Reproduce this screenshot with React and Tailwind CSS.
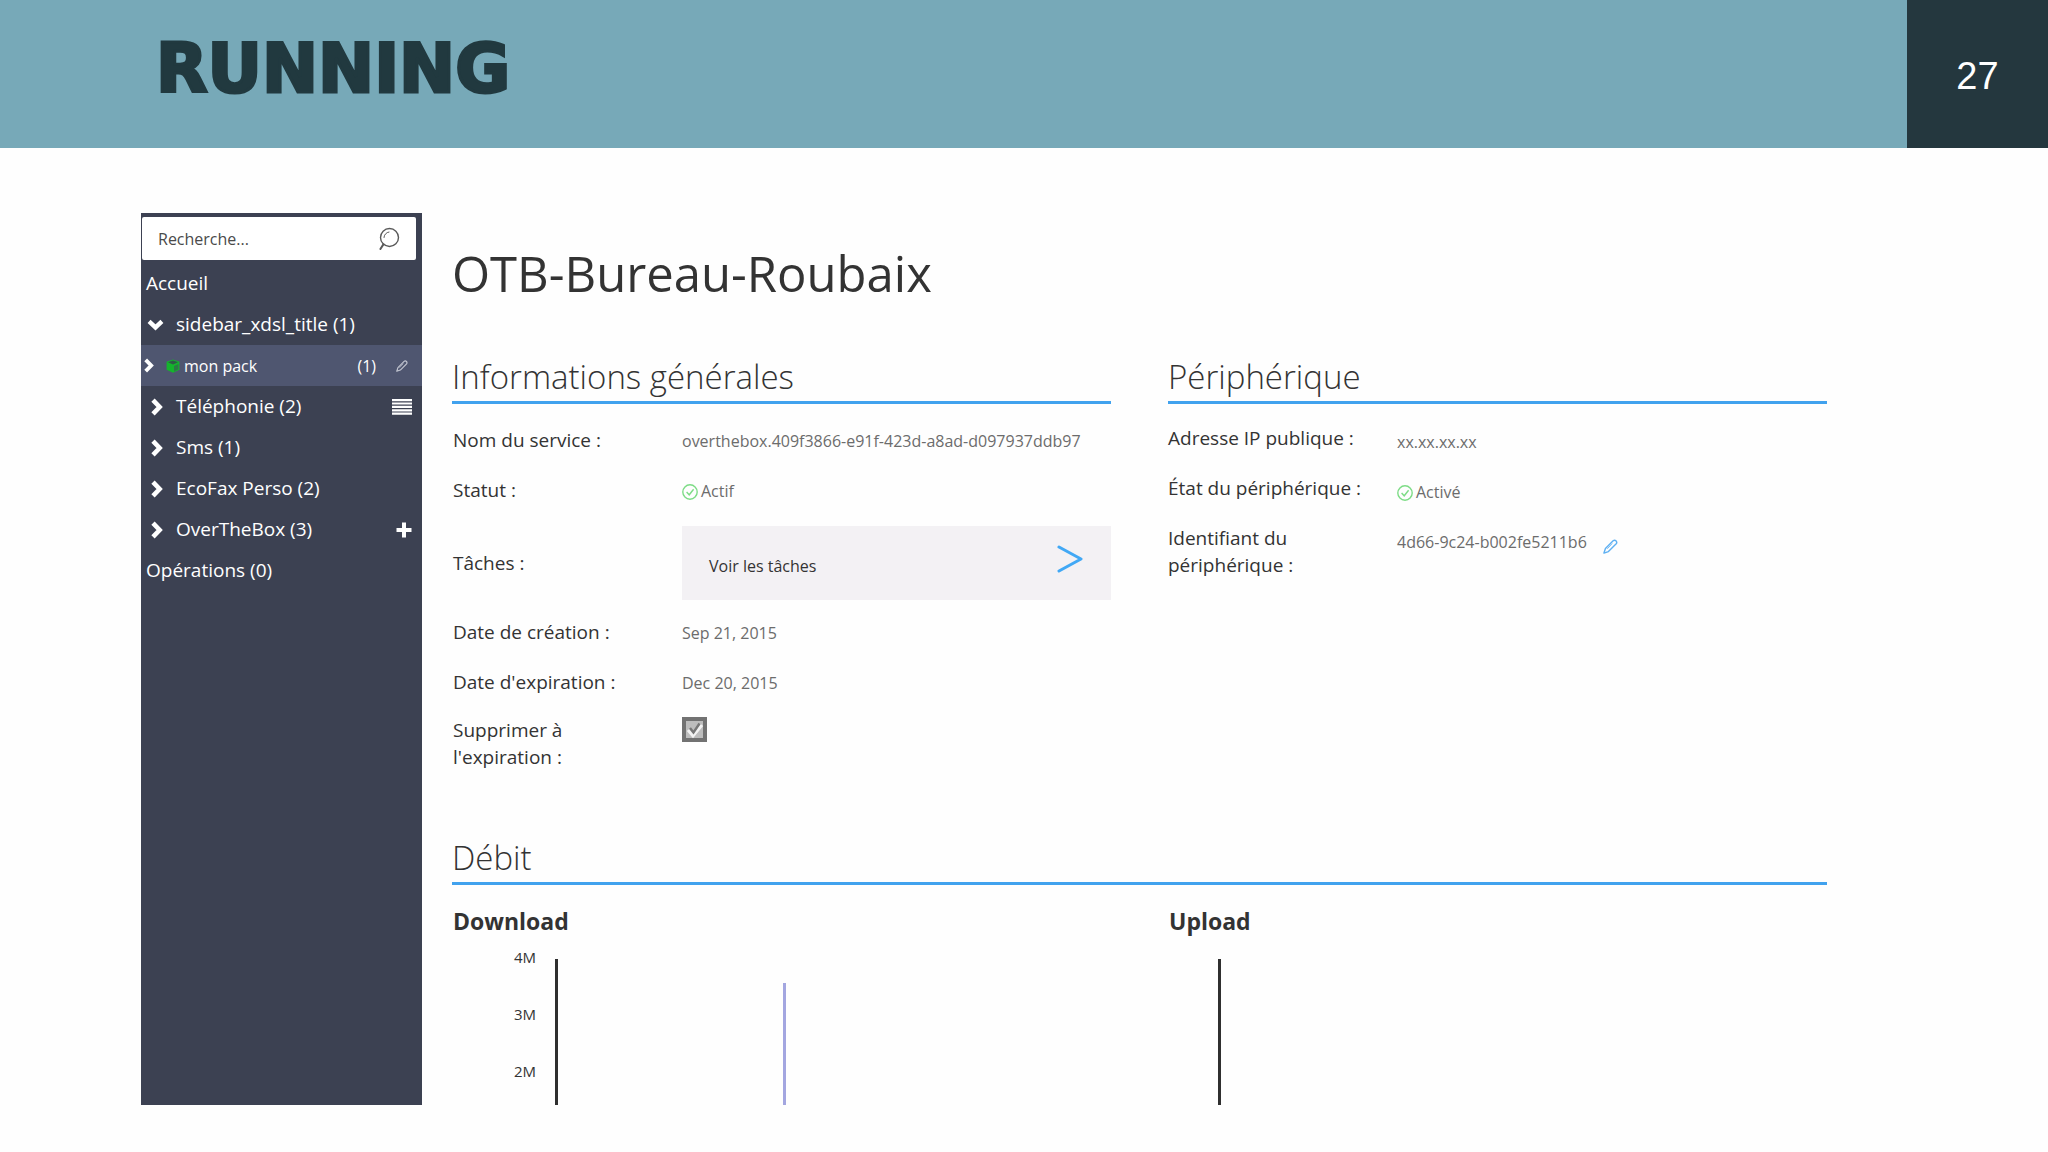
import React, { useState } from 'react';

const sidebarItems = [
  { label: 'Téléphonie (2)', action: 'list' },
  { label: 'Sms (1)' },
  { label: 'EcoFax Perso (2)' },
  { label: 'OverTheBox (3)', action: 'add' },
];

function ChevronRight({ className }) {
  return (
    <svg viewBox="0 0 12 18" className={className} fill="none" stroke="currentColor" strokeWidth="4.6" aria-hidden="true">
      <path d="M2 2.2 L8.6 9 L2 15.8" />
    </svg>
  );
}

function ChevronDown({ className }) {
  return (
    <svg viewBox="0 0 18 12" className={className} fill="none" stroke="currentColor" strokeWidth="4.6" aria-hidden="true">
      <path d="M2.2 2.2 L9 8.6 L15.8 2.2" />
    </svg>
  );
}

function SearchIcon() {
  return (
    <svg viewBox="0 0 22 24" className="w-[22px] h-6" fill="none" stroke="#5a5a5a" strokeLinecap="round" aria-hidden="true">
      <circle cx="11.5" cy="10.5" r="9" strokeWidth="1.4" />
      <path d="M6 10.5 A5.6 5.6 0 0 1 11 5" strokeWidth="1" />
      <path d="M5.4 17.4 L2.4 22" strokeWidth="2" />
    </svg>
  );
}

function Pencil({ className }) {
  return (
    <svg viewBox="0 0 16 16" className={className} fill="none" stroke="currentColor" strokeWidth="1.5" strokeLinejoin="round" aria-hidden="true">
      <path d="M1 15 L2.6 10.2 L10.8 1.8 Q12.4 0.6 13.9 2 Q15.3 3.5 14.1 5.1 L5.8 13.4 Z" />
      <path d="M9.8 4.8 L4.6 10.4" strokeWidth="0.9" />
    </svg>
  );
}

function Cube() {
  return (
    <svg viewBox="0 0 14 14" className="w-[14px] h-[14px]" aria-hidden="true">
      <path d="M7 0.4 L13.4 2.8 V10.8 L7 13.8 L0.6 10.8 V2.8 Z" fill="#14b52c" />
      <path d="M7 1.4 L12 3.2 L7 5.4 L2 3.2 Z" fill="#2f5a47" />
      <path d="M8 7 L12.4 5 V10.2 L8 12.4 Z" fill="#2b7a44" />
    </svg>
  );
}

function CheckCircle() {
  return (
    <svg viewBox="0 0 16 16" className="inline-block w-4 h-4 mr-[3px] align-[-3px]" fill="none" stroke="#7ddc86" strokeWidth="1.4" aria-hidden="true">
      <circle cx="8" cy="8" r="7.2" />
      <path d="M4.6 8 L7.2 10.8 L11.6 5.2" />
    </svg>
  );
}

function SectionTitle({ children }) {
  return (
    <h2 className="text-[33px] leading-[44px] font-light text-[#333333] pb-0.5 border-b-3 border-[#41a2ee]">
      {children}
    </h2>
  );
}

function Row({ label, children }) {
  return (
    <div className="flex items-baseline h-[50px] pt-[11px]">
      <dt className="w-[229px] shrink-0 pr-6">{label}</dt>
      <dd className="text-[16px] text-[#6c6c6c]">{children}</dd>
    </div>
  );
}

function DeviceRow({ label, children }) {
  return (
    <div className="flex items-start min-h-[50px] pt-[11px]">
      <dt className="w-[229px] shrink-0 pr-6">{label}</dt>
      <dd className="text-[16px] text-[#6c6c6c] pt-1">{children}</dd>
    </div>
  );
}

export default function App() {
  const [search, setSearch] = useState('');
  const [removeOnExpiry, setRemoveOnExpiry] = useState(true);

  return (
    <div className="min-h-screen flex flex-col bg-[#fefefe] font-['Open_Sans',sans-serif] text-[#333333]">
      {/* Slide banner */}
      <header className="flex h-[148px] bg-[#77a9b8]">
        <h1 className="flex-1 pl-[156px] pt-[29px] text-[67px] leading-[80px] font-bold text-[#21393f] font-['DejaVu_Sans',sans-serif] [-webkit-text-stroke:3px_#21393f]">
          RUNNING
        </h1>
        <div className="w-[141px] pt-1 flex items-center justify-center bg-[#24373e] text-white text-[38px] font-['Liberation_Sans',sans-serif]">
          27
        </div>
      </header>

      <div className="flex-1 flex mt-[65px] mb-[47px] ml-[141px] mr-[221px]">
        {/* Sidebar */}
        <aside className="w-[281px] shrink-0 bg-[#3c4152] text-white text-[19px]">
          <div className="pt-1 pl-px pr-1.5 pb-[3px]">
            <label className="flex items-center h-[43px] bg-white rounded-xs pl-4 pr-4">
              <input
                type="text"
                aria-label="Recherche"
                placeholder="Recherche..."
                value={search}
                onChange={(e) => setSearch(e.target.value)}
                className="flex-1 min-w-0 text-[16px] text-[#444444] placeholder:text-[#4a4a4a] outline-none"
              />
              <SearchIcon />
            </label>
          </div>
          <nav>
            <a href="#accueil" className="flex items-center h-[41px] pl-[5px]">Accueil</a>
            <a href="#xdsl" className="flex items-center h-[41px] pl-1.5">
              <span className="w-[29px]"><ChevronDown className="w-[17px] h-[12px]" /></span>
              sidebar_xdsl_title (1)
            </a>
            <div className="flex items-center h-[41px] pl-[3px] pr-[14px] bg-[#4f5670] text-[16px]">
              <a href="#pack" className="flex-1 flex items-center">
                <span className="w-[22px]"><ChevronRight className="w-[10px] h-[15px]" /></span>
                <Cube />
                <span className="ml-1">mon pack</span>
              </a>
              <span>(1)</span>
              <button type="button" aria-label="Renommer" className="ml-5 text-[#c4c7d2]">
                <Pencil className="w-3 h-3" />
              </button>
            </div>
            {sidebarItems.map((item) => (
              <div key={item.label} className="flex items-center h-[41px] pl-2.5 pr-2.5">
                <a href="#service" className="flex-1 flex items-center">
                  <span className="w-[25px]"><ChevronRight className="w-[12px] h-[18px]" /></span>
                  {item.label}
                </a>
                {item.action === 'list' && (
                  <button type="button" aria-label="Liste">
                    <svg viewBox="0 0 20 16" className="w-5 h-4" fill="currentColor" aria-hidden="true">
                      <path d="M0 0h20v2.2H0z M0 3.4h20v2.2H0z M0 6.8h20v2.2H0z M0 10.2h20v2.2H0z M0 13.6h20v2.2H0z" />
                    </svg>
                  </button>
                )}
                {item.action === 'add' && (
                  <button type="button" aria-label="Ajouter">
                    <svg viewBox="0 0 16 16" className="w-4 h-4" fill="currentColor" aria-hidden="true">
                      <path d="M6 0.5h4v5.5h5.5v4H10v5.5H6V10H0.5V6H6z" />
                    </svg>
                  </button>
                )}
              </div>
            ))}
            <a href="#operations" className="flex items-center h-[41px] pl-[5px]">Opérations (0)</a>
          </nav>
        </aside>

        {/* Service details */}
        <main className="flex-1 min-w-0 ml-[30px] pt-[30px] text-[19px] leading-[27px]">
          <h1 className="text-[49px] leading-[60px]">OTB-Bureau-Roubaix</h1>

          <div className="grid grid-cols-2 gap-x-[57px] mt-[52px]">
            <section>
              <SectionTitle>Informations générales</SectionTitle>
              <dl className="mt-3 pl-px">
                <Row label="Nom du service :">overthebox.409f3866-e91f-423d-a8ad-d097937ddb97</Row>
                <Row label="Statut :"><CheckCircle />Actif</Row>
                <div className="flex items-center pt-2.5 pb-2">
                  <dt className="w-[229px] shrink-0">Tâches :</dt>
                  <dd className="flex-1">
                    <button type="button" className="flex items-center justify-between w-full h-[74px] pl-[27px] pr-7 bg-[#f3f1f4] text-[16px]">
                      <span className="pt-1.5">Voir les tâches</span>
                      <svg viewBox="0 0 26 28" className="w-[26px] h-7 mb-2" fill="none" stroke="#41a8f5" strokeWidth="3" strokeLinecap="round" strokeLinejoin="round" aria-hidden="true">
                        <path d="M2 2 L24 14 L2 26" />
                      </svg>
                    </button>
                  </dd>
                </div>
                <Row label="Date de création :">Sep 21, 2015</Row>
                <Row label="Date d'expiration :">Dec 20, 2015</Row>
                <div className="flex items-start pt-[9px]">
                  <dt className="w-[229px] shrink-0 pr-24">
                    <label htmlFor="remove">Supprimer à l'expiration :</label>
                  </dt>
                  <dd className="grid">
                    <input
                      id="remove"
                      type="checkbox"
                      checked={removeOnExpiry}
                      onChange={(e) => setRemoveOnExpiry(e.target.checked)}
                      className="peer col-start-1 row-start-1 appearance-none w-[25px] h-[25px] border-4 border-[#727272] bg-[#bdbdbd]"
                    />
                    <svg viewBox="0 0 25 25" className="col-start-1 row-start-1 w-[25px] h-[25px] pointer-events-none hidden peer-checked:block" fill="none" aria-hidden="true">
                      <path d="M6 13 L11 19 L20 8" stroke="#f2f2f2" strokeWidth="3" />
                      <path d="M8 11 L11.5 15.5 L17.5 6.5" stroke="#777777" strokeWidth="2.4" />
                    </svg>
                  </dd>
                </div>
              </dl>
            </section>

            <section>
              <SectionTitle>Périphérique</SectionTitle>
              <dl className="mt-2.5">
                <DeviceRow label="Adresse IP publique :">xx.xx.xx.xx</DeviceRow>
                <DeviceRow label="État du périphérique :"><CheckCircle />Activé</DeviceRow>
                <DeviceRow label="Identifiant du périphérique :">
                  <span className="flex items-center gap-4">
                    4d66-9c24-b002fe5211b6
                    <button type="button" aria-label="Modifier" className="pt-2 text-[#5eb0f2]">
                      <Pencil className="w-[15px] h-[15px]" />
                    </button>
                  </span>
                </DeviceRow>
              </dl>
            </section>
          </div>

          <section className="mt-[65px]">
            <SectionTitle>Débit</SectionTitle>
            <div className="grid grid-cols-2 gap-x-[57px] mt-[21px]">
              <div>
                <h3 className="pl-px text-[23px] leading-[30px] font-bold">Download</h3>
                <svg className="block w-full h-[169px] text-[15px]" role="img" aria-label="Download">
                  <g fill="#333333" textAnchor="end">
                    <text x="84" y="27">4M</text>
                    <text x="84" y="84">3M</text>
                    <text x="84" y="141">2M</text>
                  </g>
                  <rect x="103" y="23" width="3" height="146" fill="#2f2f2f" />
                  <rect x="331" y="47" width="3" height="122" fill="#a3a6e0" />
                </svg>
              </div>
              <div>
                <h3 className="pl-px text-[23px] leading-[30px] font-bold">Upload</h3>
                <svg className="block w-full h-[169px]" role="img" aria-label="Upload">
                  <rect x="50" y="23" width="3" height="146" fill="#2f2f2f" />
                </svg>
              </div>
            </div>
          </section>
        </main>
      </div>
    </div>
  );
}
